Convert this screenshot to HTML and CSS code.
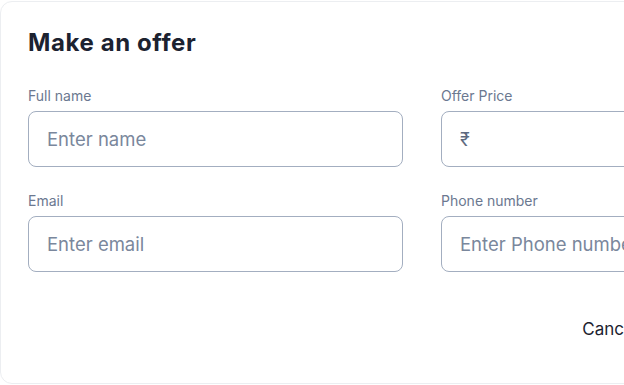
FILE: index.html
```html
<!DOCTYPE html>
<html lang="en">
<head>
<meta charset="utf-8">
<title>Make an offer</title>
<link rel="stylesheet" href="styles.css">
</head>
<body>
<div class="card">
  <h1 class="title">Make an offer</h1>
  <form class="grid">
    <div class="field">
      <label class="label">Full name</label>
      <div class="input"><span class="ph">Enter name</span></div>
    </div>
    <div class="field">
      <label class="label">Offer Price</label>
      <div class="input"><span class="cur">₹</span></div>
    </div>
    <div class="field">
      <label class="label">Email</label>
      <div class="input"><span class="ph">Enter email</span></div>
    </div>
    <div class="field">
      <label class="label">Phone number</label>
      <div class="input"><span class="ph">Enter Phone number</span></div>
    </div>
  </form>
  <div class="footer">
    <button class="btn cancel" type="button">Cancel</button>
    <button class="btn submit" type="button">Submit offer</button>
  </div>
</div>
</body>
</html>
```
FILE: styles.css
```css
html, body {
  margin: 0;
  padding: 0;
  background: #ffffff;
  overflow: hidden;
}
body {
  font-family: Inter, "Noto Sans", sans-serif;
}
.card {
  box-sizing: border-box;
  width: 844px;
  height: 383px;
  margin-top: 1px;
  border: 1px solid #eceef1;
  border-radius: 12px;
  padding: 24px 27px 0 27px;
  background: #fff;
}
.title {
  margin: 0;
  font-size: 24px;
  line-height: 34px;
  font-weight: 700;
  color: #1c2230;
  letter-spacing: 0.6px;
}
.grid {
  margin-top: 27px;
  display: grid;
  grid-template-columns: 375px 375px;
  column-gap: 38px;
  row-gap: 25px;
}
.field {
  display: flex;
  flex-direction: column;
}
.label {
  font-size: 14px;
  line-height: 18px;
  color: #6b7890;
  margin-bottom: 6px;
}
.input {
  box-sizing: border-box;
  height: 56px;
  border: 1px solid #a3aec0;
  border-radius: 8px;
  display: flex;
  align-items: center;
  padding: 0 18px;
  overflow: hidden;
  white-space: nowrap;
}
.ph {
  font-size: 18.5px;
  color: #7a879c;
}
.cur {
  font-size: 18px;
  color: #5d6a80;
}
.footer {
  display: flex;
  justify-content: flex-end;
  gap: 12px;
  margin-top: 35px;
}
.btn {
  font-family: Inter, "Noto Sans", sans-serif;
  font-size: 17px;
  border-radius: 8px;
  height: 44px;
  padding: 0 20px;
  cursor: pointer;
}
.cancel {
  background: #fff;
  border: none;
  color: #1c2230;
}
.submit {
  background: #1c2230;
  border: none;
  color: #fff;
  width: 146px;
}
```
